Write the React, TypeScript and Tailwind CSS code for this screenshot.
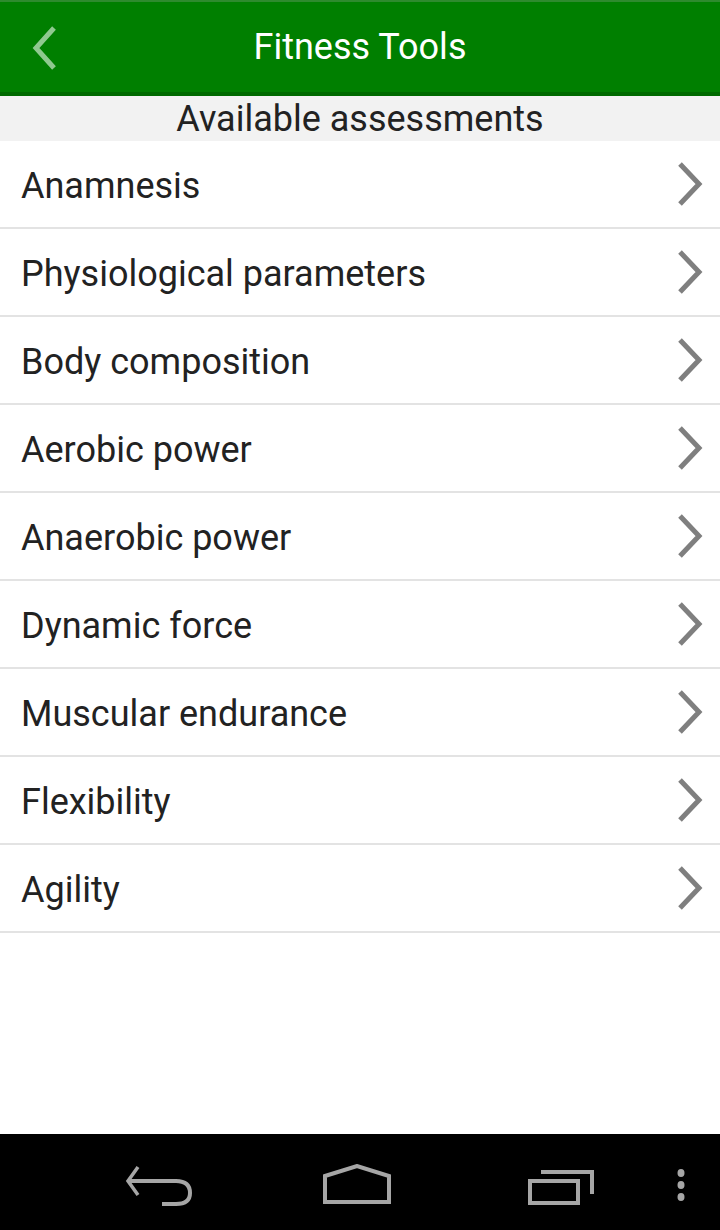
import React from "react";

const items = [
  "Anamnesis",
  "Physiological parameters",
  "Body composition",
  "Aerobic power",
  "Anaerobic power",
  "Dynamic force",
  "Muscular endurance",
  "Flexibility",
  "Agility",
];

const Chevron = () => (
  <svg width="28" height="44" viewBox="0 0 28 44" className="shrink-0">
    <path d="M4 2 L23 22 L4 42" fill="none" stroke="#7f7f7f" strokeWidth="5" />
  </svg>
);

export default function App() {
  return (
    <div
      className="w-[720px] h-[1230px] flex flex-col bg-white overflow-hidden"
      style={{ fontFamily: "Roboto, 'Noto Sans', sans-serif" }}
    >
      {/* action bar */}
      <div className="h-[96px] shrink-0 flex flex-col">
        <div className="h-[2px] bg-[#2e8b2e]" />
        <div className="relative flex-1 bg-[#007f00] flex items-center justify-center">
          <svg
            width="30"
            height="46"
            viewBox="0 0 30 46"
            className="absolute left-[28px] top-[23px]"
          >
            <path d="M26 3 L8 23 L26 43" fill="none" stroke="#8fc98f" strokeWidth="5" />
          </svg>
          <span className="text-white text-[36px] leading-none">Fitness Tools</span>
        </div>
        <div className="h-[4px] bg-[#006a00]" />
      </div>

      <div className="h-[45px] shrink-0 bg-[#f2f2f2] flex items-center justify-center">
        <span className="text-[#222] text-[36px] leading-none">Available assessments</span>
      </div>

      <div className="flex-1 flex flex-col">
        {items.map((label) => (
          <div
            key={label}
            className="h-[88px] shrink-0 flex items-center justify-between pl-[21px] pr-[16px] border-b-2 border-[#e3e3e3]"
          >
            <span className="text-[#222] text-[36px] leading-none mt-[3px]">{label}</span>
            <Chevron />
          </div>
        ))}
      </div>

      {/* navigation bar */}
      <div className="h-[96px] shrink-0 bg-black relative">
        <svg width="70" height="44" viewBox="0 0 70 44" className="absolute left-[124px] top-[30px]">
          <path d="M14 3 L4 17 L14 31" fill="none" stroke="#a6a6a6" strokeWidth="3.5" />
          <path d="M4 17 L52 17 Q66 17 66 29 Q66 40 52 40 L38 40" fill="none" stroke="#a6a6a6" strokeWidth="4" />
        </svg>
        <svg width="70" height="42" viewBox="0 0 70 42" className="absolute left-[323px] top-[30px]">
          <path d="M2 12 L34 2 L66 12 L66 38 L2 38 Z" fill="none" stroke="#a6a6a6" strokeWidth="4" />
        </svg>
        <svg width="72" height="40" viewBox="0 0 72 40" className="absolute left-[527px] top-[33px]">
          <rect x="3" y="14" width="48" height="22" fill="none" stroke="#a6a6a6" strokeWidth="4" />
          <path d="M14 5 L65 5 L65 27" fill="none" stroke="#a6a6a6" strokeWidth="4" />
        </svg>
        <svg width="12" height="36" viewBox="0 0 12 36" className="absolute left-[675px] top-[35px]">
          <ellipse cx="6" cy="4" rx="3.5" ry="4" fill="#a6a6a6" />
          <ellipse cx="6" cy="16" rx="3.5" ry="4" fill="#a6a6a6" />
          <ellipse cx="6" cy="28" rx="3.5" ry="4" fill="#a6a6a6" />
        </svg>
      </div>
    </div>
  );
}
